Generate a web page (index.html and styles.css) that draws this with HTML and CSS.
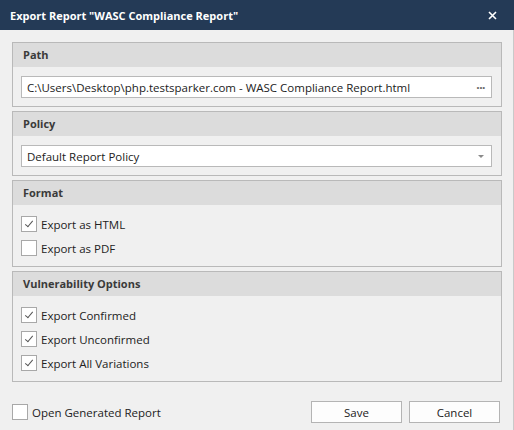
FILE: index.html
```html
<!DOCTYPE html>
<html>
<head>
    <meta charset="utf-8">
    <title>Export Report</title>
    <link rel="stylesheet" href="styles.css">
</head>
<body>
    <div class="dialog">
        <div class="titlebar">
            <span class="title">Export Report "WASC Compliance Report"</span>
            <svg class="close" width="9" height="9" viewBox="0 0 9 9">
                <path d="M1 1 L8 8 M8 1 L1 8" stroke="#ffffff" stroke-width="1.6" />
            </svg>
        </div>
        <div class="content">
            <!-- path -->
            <div class="group">
                <div class="group-head">Path</div>
                <div class="group-body">
                    <div class="field">
                        <span class="field-text">C:\Users\Desktop\php.testsparker.com - WASC Compliance Report.html</span>
                        <span class="dots">&middot;&middot;&middot;</span>
                    </div>
                </div>
            </div>

            <!-- policy -->
            <div class="group">
                <div class="group-head">Policy</div>
                <div class="group-body">
                    <div class="field">
                        <span class="field-text">Default Report Policy</span>
                        <span class="arrow"></span>
                    </div>
                </div>
            </div>

            <!-- format -->
            <div class="group">
                <div class="group-head">Format</div>
                <div class="group-body check-list">
                    <label class="check"><span class="box checked"></span>Export as HTML</label>
                    <label class="check"><span class="box"></span>Export as PDF</label>
                </div>
            </div>

            <!-- vulnerability -->
            <div class="group">
                <div class="group-head">Vulnerability Options</div>
                <div class="group-body check-list">
                    <label class="check"><span class="box checked"></span>Export Confirmed</label>
                    <label class="check"><span class="box checked"></span>Export Unconfirmed</label>
                    <label class="check"><span class="box checked"></span>Export All Variations</label>
                </div>
            </div>

            <div class="footer">
                <label class="check open-report"><span class="box"></span>Open Generated Report</label>
                <div class="buttons">
                    <button class="btn">Save</button>
                    <button class="btn">Cancel</button>
                </div>
            </div>
        </div>
    </div>
</body>
</html>
```

FILE: styles.css
```css
html
{
    font-family: "Open Sans", "Noto Sans", sans-serif;
    font-size: 11.5px;
    color: #222222;
}

body
{
    margin: 0;
    background-color: #f0f0f0;
}

.dialog
{
    width: 514px;
    height: 430px;
    overflow: hidden;
}

.titlebar
{
    height: 30px;
    background-color: #243a56;
    display: flex;
    align-items: center;
    justify-content: space-between;
    padding: 0 17px 0 10px;
}

.title
{
    color: white;
    font-weight: bold;
    font-size: 11px;
}

.close
{
    display: block;
}

.content
{
    height: 400px;
    box-sizing: border-box;
    padding: 12px 11px 0 12px;
    border-right: 1px solid #c9c9c9;
    display: flex;
    flex-direction: column;
    gap: 4px;
}

.group
{
    border: 1px solid #b9b9b9;
}

.group-head
{
    height: 24px;
    line-height: 24px;
    background-color: #dcdcdc;
    padding-left: 10px;
    font-weight: bold;
    font-size: 11px;
    color: #3a3a3a;
}

.group-body
{
    padding: 9px 9px 8px 8px;
}

.field
{
    height: 22px;
    box-sizing: border-box;
    border: 1px solid #b9b9b9;
    background-color: white;
    display: flex;
    align-items: center;
    justify-content: space-between;
    padding: 0 4px 0 5px;
}

.dots
{
    color: #666666;
    font-size: 12px;
    font-weight: bold;
    letter-spacing: -0.5px;
    padding-right: 2px;
}

.arrow
{
    width: 0;
    height: 0;
    border-left: 3px solid transparent;
    border-right: 3px solid transparent;
    border-top: 3px solid #8a8a8a;
    margin-right: 3px;
}

.check-list
{
    padding: 7px 8px 6px 8px;
}

.check
{
    height: 24px;
    display: flex;
    align-items: center;
    gap: 4px;
}

.box
{
    width: 16px;
    height: 16px;
    box-sizing: border-box;
    border: 1px solid #a8a8a8;
    background-color: white;
    position: relative;
}

.box.checked::after
{
    content: "";
    position: absolute;
    left: 5px;
    top: 2px;
    width: 3px;
    height: 7px;
    border-right: 1px solid #555;
    border-bottom: 1px solid #555;
    transform: rotate(40deg);
}

.footer
{
    margin-top: 15px;
    height: 22px;
    display: flex;
    align-items: center;
    justify-content: space-between;
    padding-right: 2px;
}

.open-report
{
    height: 22px;
}

.buttons
{
    display: flex;
    gap: 7px;
}

.btn
{
    width: 91px;
    height: 22px;
    border: 1px solid #b4b4b4;
    background-color: #fdfdfd;
    font-family: inherit;
    font-size: 11.5px;
    color: #222222;
    padding: 0;
}
```
